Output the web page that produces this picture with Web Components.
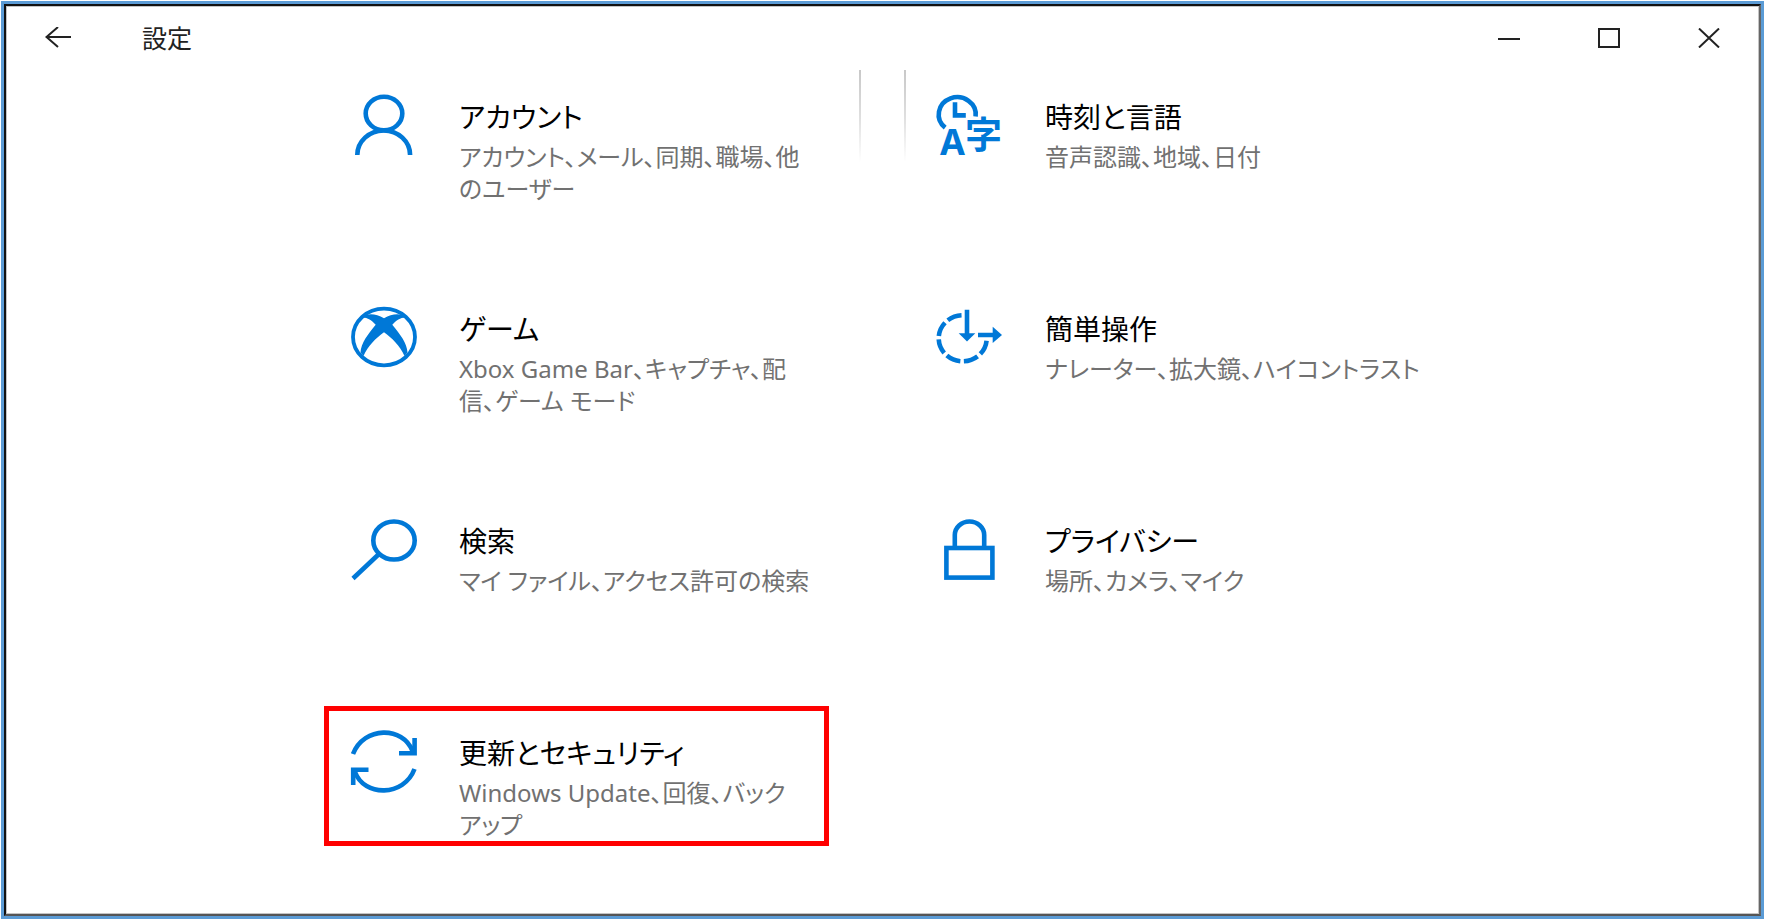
<!DOCTYPE html>
<html lang="ja">
<head>
<meta charset="utf-8">
<meta name="viewport" content="width=device-width, initial-scale=1">
<title>設定</title>
<style>
  body {
    margin: 0;
    background: #fff;
    color: #000;
    font-family: "Noto Sans", "Noto Sans CJK JP", sans-serif;
    font-feature-settings: "palt";
  }
</style>
</head>
<body>
<settings-window>
  <title-bar slot="bar">設定</title-bar>
  <settings-grid>
    <settings-item icon="account">アカウント<span slot="desc">アカウント、メール、同期、職場、他<br>のユーザー</span></settings-item>
    <scroll-edge></scroll-edge>
    <settings-item icon="time">時刻と言語<span slot="desc">音声認識、地域、日付</span></settings-item>
    <settings-item icon="game">ゲーム<span slot="desc">Xbox Game Bar、キャプチャ、配<br>信、ゲーム モード</span></settings-item>
    <settings-item icon="ease" class="right">簡単操作<span slot="desc">ナレーター、拡大鏡、ハイコントラスト</span></settings-item>
    <settings-item icon="search">検索<span slot="desc">マイ ファイル、アクセス許可の検索</span></settings-item>
    <settings-item icon="privacy" class="right">プライバシー<span slot="desc">場所、カメラ、マイク</span></settings-item>
    <settings-item icon="update" marked>更新とセキュリティ<span slot="desc">Windows Update、回復、バック<br>アップ</span></settings-item>
  </settings-grid>
</settings-window>

<script>
const icons = {
  account: `
    <ellipse cx="33" cy="18.5" rx="18.3" ry="16.8"/>
    <path d="M6.3 60A26.4 24.5 0 0 1 59.1 60"/>`,
  time: `
    <path d="M8.2 32.6A18.5 17.3 0 1 1 38.6 21.5"/>
    <path d="M18 7.3V20.4H28.8"/>
    <text x="3" y="60" font-size="36">A</text>
    <text x="28" y="54" font-size="37">字</text>`,
  game: `
    <ellipse cx="33" cy="30" rx="31" ry="28.3" stroke-width="3.8"/>
    <path class="fill" d="M10.5 10.5C17 5.5 25 7 33 11.3C41 7 49 5.5 55.5 10.5C50 10 45.5 13 41.3 17.7C49 27 56 36 56.5 45.5L53.5 49C49 39 41 31 33 25.3C25 31 17 39 12.5 49L9.5 45.5C10 36 17 27 24.7 17.7C20.5 13 16 10 10.5 10.5Z"/>`,
  ease: `
    <path d="M25.7 8.3A24 23 0 1 0 49.7 31.3" pathLength="270" stroke-dasharray="36 9" stroke-dashoffset="-3"/>
    <path d="M30 2.7V28M41 28H57"/>
    <path class="fill" d="M21.7 26.3H38.3L30 34.5Z"/>
    <path class="fill" d="M55.7 19.8L65 28L55.7 36Z"/>`,
  search: `
    <ellipse cx="43" cy="21.5" rx="20.7" ry="19"/>
    <path d="M28 35L2 59.5"/>`,
  privacy: `
    <rect x="9.4" y="29" width="46" height="29.6"/>
    <path d="M17.8 29V16A14.7 13.5 0 0 1 47.2 16V29"/>`,
  update: `
    <path d="M2 23C13 -5 52 -5 61.5 20"/>
    <path d="M48 22.2H63.6V7"/>
    <path d="M63.5 38C53 66 13 66 4 41"/>
    <path d="M17.5 38.8H2.2V54"/>`
};

class SettingsWindow extends HTMLElement {
  connectedCallback() {
    this.attachShadow({ mode: 'open' });
    this.shadowRoot.innerHTML = `
      <style>
        :host {
          display: flex;
          box-sizing: border-box;
          min-height: 100vh;
          padding: 1px;
        }
        .edge {
          display: flex;
          flex: 1;
          border: 3px solid #5b9bd5;
        }
        .frame {
          flex: 1;
          border: 2px solid #111;
          border-right-color: #666;
          border-bottom-color: #555;
          box-shadow: inset 0 0 0 1px #c4c4c4;
        }
      </style>
      <div class="edge">
        <div class="frame">
          <slot name="bar"></slot>
          <main><slot></slot></main>
        </div>
      </div>
    `;
  }
}

class TitleBar extends HTMLElement {
  connectedCallback() {
    this.attachShadow({ mode: 'open' });
    this.shadowRoot.innerHTML = `
      <style>
        :host {
          display: block;
        }
        header {
          display: flex;
          align-items: stretch;
          height: 64px;
        }
        h1 {
          flex: 1;
          margin: 0;
          padding-left: 32px;
          font-size: 25px;
          font-weight: 400;
          line-height: 64px;
          color: #222;
        }
        button {
          display: grid;
          place-items: center;
          width: 100px;
          padding: 0;
          border: none;
          background: none;
          color: #222;
        }
        .back {
          width: 104px;
        }
        button:hover {
          background: #e5e5e5;
        }
        svg {
          fill: none;
          stroke: currentColor;
          stroke-width: 2;
        }
      </style>
      <header>
        <button class="back" aria-label="戻る">
          <svg width="26" height="22" viewBox="0 0 26 22"><path d="M26 10H1.5M13 0L1.5 10L13 20"/></svg>
        </button>
        <h1><slot></slot></h1>
        <button aria-label="最小化">
          <svg width="22" height="20" viewBox="0 0 22 20"><path d="M0 11H22"/></svg>
        </button>
        <button aria-label="最大化">
          <svg width="22" height="20" viewBox="0 0 22 20"><path d="M1 1H21V19H1Z"/></svg>
        </button>
        <button aria-label="閉じる">
          <svg width="22" height="20" viewBox="0 0 22 20"><path d="M1 0.5L21 19.5M21 0.5L1 19.5"/></svg>
        </button>
      </header>
    `;
  }
}

class SettingsGrid extends HTMLElement {
  connectedCallback() {
    this.attachShadow({ mode: 'open' });
    this.shadowRoot.innerHTML = `
      <style>
        :host {
          display: grid;
          grid-template-columns: minmax(0, 505px) 81px minmax(0, 505px);
          grid-auto-rows: minmax(140px, auto);
          row-gap: 72px;
          justify-content: center;
          padding: 0 26px 24px 0;
        }
        ::slotted(.right) {
          grid-column: 3;
        }
      </style>
      <slot></slot>
    `;
  }
}

// fading lines between the two columns
class ScrollEdge extends HTMLElement {
  connectedCallback() {
    this.attachShadow({ mode: 'open' });
    this.shadowRoot.innerHTML = `
      <style>
        :host {
          display: flex;
          justify-content: space-between;
          height: 92px;
          padding: 0 4px 0 30px;
        }
        i {
          width: 2px;
          background: linear-gradient(#c8c8c8, #dedede 50%, #fff);
        }
      </style>
      <i></i><i></i>
    `;
  }
}

class SettingsItem extends HTMLElement {
  connectedCallback() {
    this.attachShadow({ mode: 'open' });
    this.shadowRoot.innerHTML = `
      <style>
        :host {
          display: block;
        }
        a {
          display: flex;
          gap: 42px;
          box-sizing: border-box;
          min-height: 140px;
          padding: 20px 0 0 22px;
          border: 5px solid transparent;
          color: inherit;
          text-decoration: none;
        }
        :host([marked]) a {
          border-color: #f00;
        }
        svg {
          flex: none;
          width: 66px;
          height: 60px;
          overflow: visible;
          fill: none;
          stroke: #0078d7;
          stroke-width: 4.6;
        }
        svg .fill, svg text {
          fill: #0078d7;
          stroke: none;
        }
        svg text {
          font-weight: 700;
        }
        .text {
          flex: 1;
          min-width: 0;
        }
        h2 {
          margin: 0 0 2px;
          font-size: 28px;
          font-weight: 400;
          line-height: 44px;
        }
        p {
          margin: 0;
          font-size: 24px;
          line-height: 32px;
          white-space: nowrap;
          color: #717171;
        }
      </style>
      <a href="#${this.getAttribute('icon')}">
        <svg viewBox="0 0 66 60" aria-hidden="true">${icons[this.getAttribute('icon')]}</svg>
        <div class="text">
          <h2><slot></slot></h2>
          <p><slot name="desc"></slot></p>
        </div>
      </a>
    `;
  }
}

customElements.define('settings-window', SettingsWindow);
customElements.define('title-bar', TitleBar);
customElements.define('settings-grid', SettingsGrid);
customElements.define('scroll-edge', ScrollEdge);
customElements.define('settings-item', SettingsItem);
</script>
</body>
</html>
